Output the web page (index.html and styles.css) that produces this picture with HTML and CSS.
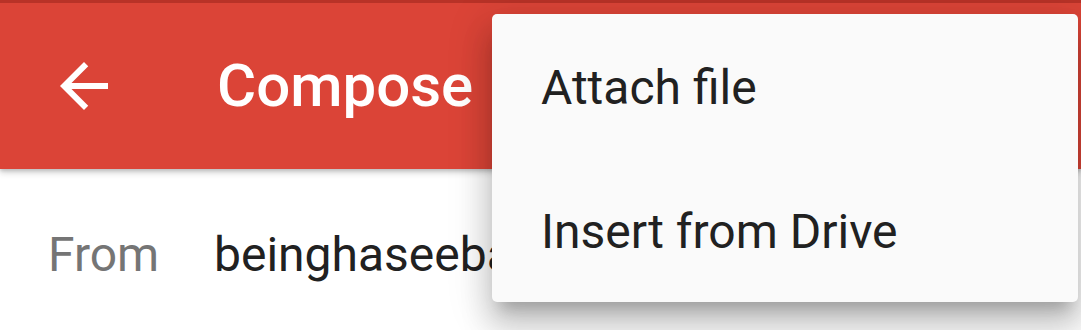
FILE: index.html
```html
<!DOCTYPE html>
<html>
<head>
<meta charset="utf-8">
<link rel="stylesheet" href="styles.css">
</head>
<body>
<div class="screen">
  <header class="toolbar">
    <div class="statusbar"></div>
    <div class="toolbar-row">
      <svg class="back" viewBox="0 0 24 24" width="72" height="72" aria-hidden="true">
        <path d="M20 11H7.83l5.59-5.59L12 4l-8 8 8 8 1.41-1.41L7.83 13H20v-2z" fill="#fff"/>
      </svg>
      <h1 class="title">Compose</h1>
    </div>
  </header>
  <main class="content">
    <div class="field-row">
      <span class="label">From</span>
      <span class="value">beinghaseebabdullah@gmail.com</span>
    </div>
  </main>
  <ul class="menu">
    <li class="menu-item">Attach file</li>
    <li class="menu-item">Insert from Drive</li>
  </ul>
</div>
</body>
</html>
```

FILE: styles.css
```css
html, body {
  margin: 0;
  padding: 0;
  background: #ffffff;
}

.screen {
  position: relative;
  width: 1081px;
  height: 330px;
  overflow: hidden;
  font-family: Roboto, "Noto Sans", "Liberation Sans", sans-serif;
  background: #ffffff;
}

.toolbar {
  position: relative;
  z-index: 1;
  height: 169px;
  background: #db4437;
  box-shadow: 0 4px 6px rgba(0, 0, 0, 0.16), 0 2px 3px rgba(0, 0, 0, 0.12);
  display: flex;
  flex-direction: column;
}

.statusbar {
  height: 3px;
  background: #b83227;
}

.toolbar-row {
  flex: 1;
  display: flex;
  align-items: center;
  padding-left: 48px;
  gap: 97px;
}

.back {
  display: block;
  flex: none;
}

.title {
  margin: 0;
  color: #ffffff;
  font-size: 60px;
  font-weight: 500;
  line-height: 70px;
}

.content {
  width: 492px;
  overflow: hidden;
  padding-top: 58px;
}

.field-row {
  display: flex;
  align-items: baseline;
  padding-left: 48px;
  font-size: 48px;
  line-height: 56px;
  white-space: nowrap;
}

.label {
  width: 166px;
  flex: none;
  color: #757575;
}

.value {
  color: #212121;
}

.menu {
  position: absolute;
  z-index: 2;
  left: 492px;
  top: 14px;
  width: 586px;
  margin: 0;
  padding: 0;
  list-style: none;
  background: #fafafa;
  border-radius: 5px;
  box-shadow: 0 24px 30px 3px rgba(0, 0, 0, 0.15),
              0 9px 42px 6px rgba(0, 0, 0, 0.13),
              0 15px 15px -9px rgba(0, 0, 0, 0.2);
}

.menu-item {
  height: 144px;
  box-sizing: border-box;
  display: flex;
  align-items: center;
  padding-left: 49px;
  padding-top: 4px;
  font-size: 48px;
  line-height: 56px;
  color: #212121;
}
```
